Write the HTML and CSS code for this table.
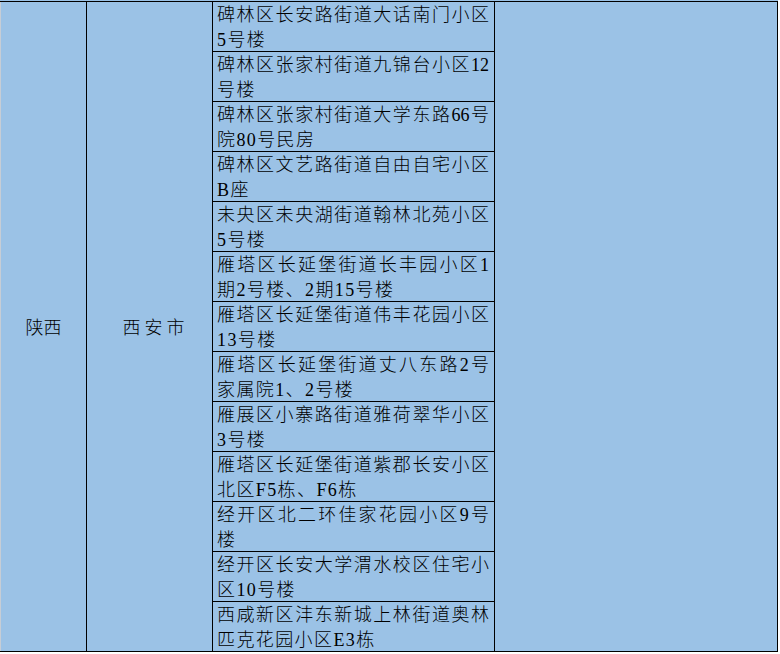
FILE: index.html
```html
<!DOCTYPE html>
<html lang="zh-CN">
<head>
<meta charset="utf-8">
<title>地址表</title>
<link rel="stylesheet" href="styles.css">
</head>
<body>
<div class="page">
  <div class="sheet">
    <div class="cell prov">陕西</div>
    <div class="cell city">西安市</div>
    <div class="cell addr"><span class="l1">碑林区长安路街道大话南门小区</span><span class="l2">5号楼</span></div>
    <div class="cell addr"><span class="l1">碑林区张家村街道九锦台小区12</span><span class="l2">号楼</span></div>
    <div class="cell addr"><span class="l1">碑林区张家村街道大学东路66号</span><span class="l2">院80号民房</span></div>
    <div class="cell addr"><span class="l1">碑林区文艺路街道自由自宅小区</span><span class="l2">B座</span></div>
    <div class="cell addr"><span class="l1">未央区未央湖街道翰林北苑小区</span><span class="l2">5号楼</span></div>
    <div class="cell addr"><span class="l1">雁塔区长延堡街道长丰园小区1</span><span class="l2">期2号楼、2期15号楼</span></div>
    <div class="cell addr"><span class="l1">雁塔区长延堡街道伟丰花园小区</span><span class="l2">13号楼</span></div>
    <div class="cell addr"><span class="l1">雁塔区长延堡街道丈八东路2号</span><span class="l2">家属院1、2号楼</span></div>
    <div class="cell addr"><span class="l1">雁展区小寨路街道雅荷翠华小区</span><span class="l2">3号楼</span></div>
    <div class="cell addr"><span class="l1">雁塔区长延堡街道紫郡长安小区</span><span class="l2">北区F5栋、F6栋</span></div>
    <div class="cell addr"><span class="l1">经开区北二环佳家花园小区9号</span><span class="l2">楼</span></div>
    <div class="cell addr"><span class="l1">经开区长安大学渭水校区住宅小</span><span class="l2">区10号楼</span></div>
    <div class="cell addr last"><span class="l1">西咸新区沣东新城上林街道奥林</span><span class="l2">匹克花园小区E3栋</span></div>
    <div class="cell blank"></div>
  </div>
</div>
</body>
</html>
```

FILE: styles.css
```css
html, body {
  margin: 0;
  padding: 0;
  background: #ffffff;
}

.page {
  width: 778px;
  padding-top: 1px;
  background: #9bc2e6;
}

.sheet {
  display: grid;
  grid-template-columns: 87px 126px 282px 283px;
  grid-template-rows: repeat(12, 50px) 49px;
  border-top: 1px solid #000;
  border-bottom: 1px solid #000;
  background: #9bc2e6;
  font-family: "Liberation Serif", "Noto Sans CJK SC", serif;
  font-size: 18px;
  font-weight: 300;
  color: #000;
}

.cell {
  box-sizing: border-box;
  border-right: 1px solid #000;
}

.prov {
  grid-column: 1;
  grid-row: 1 / -1;
  border-left: 1px solid #c6cdd6;
  display: flex;
  align-items: center;
  justify-content: center;
  padding-bottom: 1px;
}

.city {
  grid-column: 2;
  grid-row: 1 / -1;
  display: flex;
  align-items: center;
  justify-content: center;
  letter-spacing: 4px;
  padding-left: 12px;
  padding-bottom: 1px;
}

.addr {
  grid-column: 3;
  border-bottom: 1px solid #000;
  padding: 1px 5px 0 4px;
  line-height: 25px;
  letter-spacing: 1.4px;
  overflow: hidden;
  white-space: nowrap;
}

.addr.last {
  border-bottom: none;
}

.l1 {
  display: block;
  text-align: justify;
  text-align-last: justify;
  letter-spacing: 0;
}

.l2 {
  display: block;
}

.blank {
  grid-column: 4;
  grid-row: 1 / -1;
}
```
